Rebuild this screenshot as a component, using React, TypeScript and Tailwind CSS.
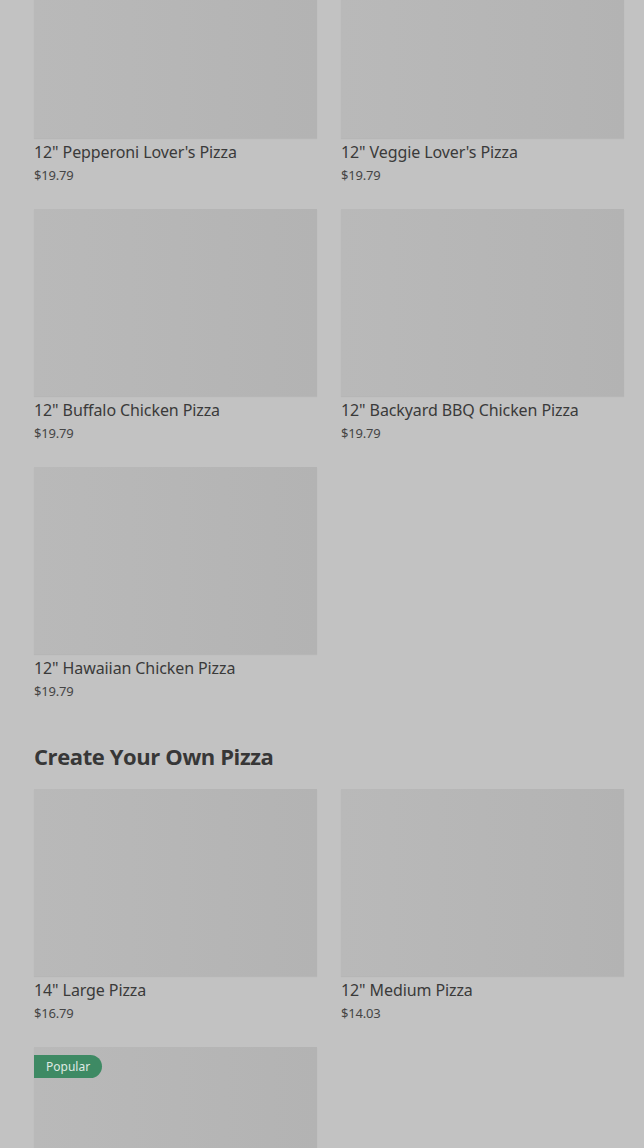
import React from "react";

type Item = {
  name: string;
  price: string;
  badge?: string;
};

const specialty: Item[] = [
  { name: '12" Pepperoni Lover\'s Pizza', price: "$19.79" },
  { name: '12" Veggie Lover\'s Pizza', price: "$19.79" },
  { name: '12" Buffalo Chicken Pizza', price: "$19.79" },
  { name: '12" Backyard BBQ Chicken Pizza', price: "$19.79" },
  { name: '12" Hawaiian Chicken Pizza', price: "$19.79" },
];

const createOwn: Item[] = [
  { name: '14" Large Pizza', price: "$16.79" },
  { name: '12" Medium Pizza', price: "$14.03" },
  { name: '10" Small Pizza', price: "$11.19", badge: "Popular" },
];

const MenuCard: React.FC<{ item: Item }> = ({ item }) => {
  return (
    <div className="flex flex-col">
      <div className="relative h-[187px] w-full bg-gradient-to-r from-[#b9b9b9] to-[#b3b3b3] shadow-[0_1px_1px_rgba(0,0,0,0.06)]">
        {item.badge && (
          <span className="absolute left-0 top-[8px] h-[23px] rounded-r-full bg-[#3e8a64] pl-[12px] pr-[12px] text-[12px] leading-[23px] text-[#dfe9e3]">
            {item.badge}
          </span>
        )}
      </div>
      <div className="mt-[3px] text-[16px] leading-[22px] tracking-[-0.1px] text-[#3a3a3a]">{item.name}</div>
      <div className="mt-[2px] text-[13px] leading-[20px] tracking-[-0.2px] text-[#454545]">{item.price}</div>
    </div>
  );
};

export default function App() {
  return (
    <div
      className="h-[1148px] overflow-hidden bg-[#c2c2c2] pl-[34px] pr-[20px]"
      style={{ fontFamily: '"Noto Sans", "Liberation Sans", sans-serif' }}
    >
      <div className="-mt-[49px] grid grid-cols-2 gap-x-[24px] gap-y-[24px]">
        {specialty.map((item) => (
          <MenuCard key={item.name} item={item} />
        ))}
      </div>

      <h2
        className="mt-[39px] mb-[17px] text-[22px] font-bold leading-[32px] tracking-[-0.4px] text-[#373737]"
        style={{ fontFamily: '"Open Sans", "Noto Sans", sans-serif' }}
      >
        Create Your Own Pizza
      </h2>

      <div className="grid grid-cols-2 gap-x-[24px] gap-y-[24px]">
        {createOwn.map((item) => (
          <MenuCard key={item.name} item={item} />
        ))}
      </div>
    </div>
  );
}
